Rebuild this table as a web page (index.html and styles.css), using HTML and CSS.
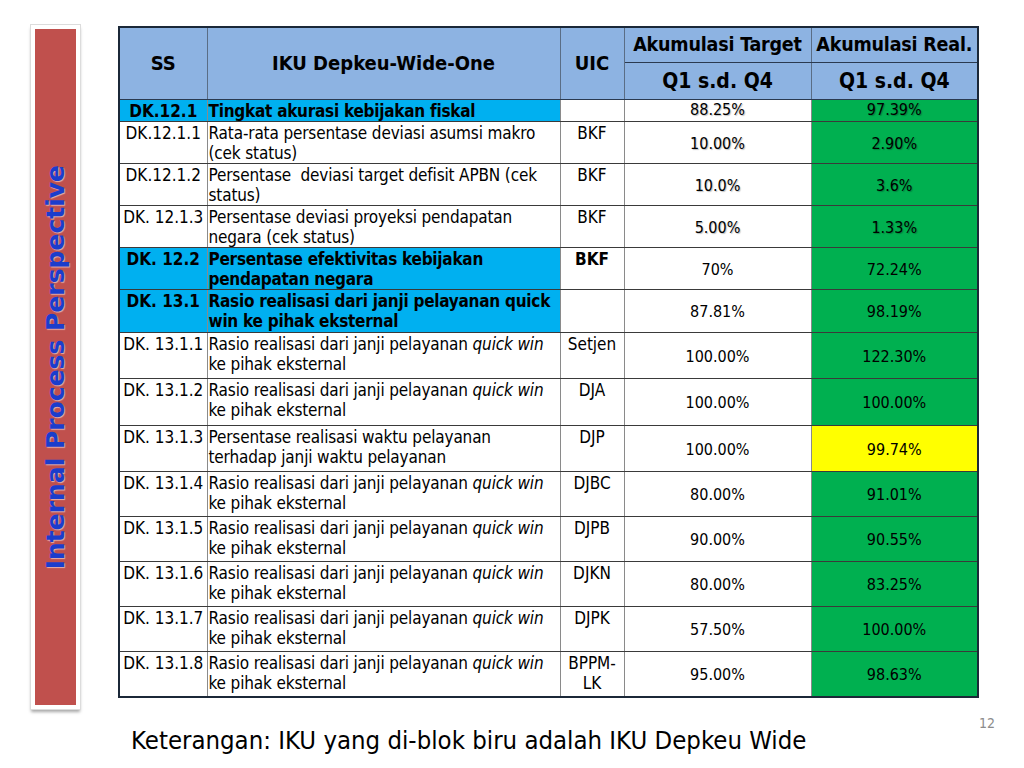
FILE: index.html
```html
<!DOCTYPE html>
<html>
<head>
<meta charset="utf-8">
<link rel="stylesheet" href="styles.css">
</head>
<body>
<div class="page">
  <div class="main">
    <div class="side">
      <div class="side-inner"><span class="side-text">Internal Process Perspective</span></div>
    </div>
    <table class="iku">
      <colgroup>
        <col class="c-ss"><col class="c-iku"><col class="c-uic"><col class="c-t"><col class="c-r">
      </colgroup>
      <thead>
        <tr class="h1">
          <th rowspan="2" class="hb">SS</th>
          <th rowspan="2" class="hb">IKU Depkeu-Wide-One</th>
          <th rowspan="2" class="hb">UIC</th>
          <th class="hs">Akumulasi Target</th>
          <th class="hs">Akumulasi Real.</th>
        </tr>
        <tr class="h2">
          <th class="hq">Q1 s.d. Q4</th>
          <th class="hq">Q1 s.d. Q4</th>
        </tr>
      </thead>
      <tbody>
        <tr class="r-main1 blue">
          <td class="ss">DK.12.1</td><td class="ik">Tingkat akurasi kebijakan fiskal</td><td class="uic white"></td><td class="num sh">88.25%</td><td class="num green sh">97.39%</td>
        </tr>
        <tr class="r42">
          <td class="ss">DK.12.1.1</td><td class="ik">Rata-rata persentase deviasi asumsi makro (cek status)</td><td class="uic">BKF</td><td class="num sh">10.00%</td><td class="num green sh">2.90%</td>
        </tr>
        <tr class="r42">
          <td class="ss">DK.12.1.2</td><td class="ik">Persentase&nbsp; deviasi target defisit APBN (cek status)</td><td class="uic">BKF</td><td class="num sh">10.0%</td><td class="num green sh">3.6%</td>
        </tr>
        <tr class="r42">
          <td class="ss">DK. 12.1.3</td><td class="ik">Persentase deviasi proyeksi pendapatan negara (cek status)</td><td class="uic">BKF</td><td class="num sh">5.00%</td><td class="num green sh">1.33%</td>
        </tr>
        <tr class="r42 blue">
          <td class="ss">DK. 12.2</td><td class="ik">Persentase efektivitas kebijakan pendapatan negara</td><td class="uic white b">BKF</td><td class="num">70%</td><td class="num green">72.24%</td>
        </tr>
        <tr class="r43 blue">
          <td class="ss">DK. 13.1</td><td class="ik">Rasio realisasi dari janji pelayanan quick win ke pihak eksternal</td><td class="uic white"></td><td class="num">87.81%</td><td class="num green">98.19%</td>
        </tr>
        <tr class="r46">
          <td class="ss">DK. 13.1.1</td><td class="ik">Rasio realisasi dari janji pelayanan <i>quick win</i> ke pihak eksternal</td><td class="uic">Setjen</td><td class="num">100.00%</td><td class="num green">122.30%</td>
        </tr>
        <tr class="r47">
          <td class="ss">DK. 13.1.2</td><td class="ik">Rasio realisasi dari janji pelayanan <i>quick win</i> ke pihak eksternal</td><td class="uic">DJA</td><td class="num">100.00%</td><td class="num green">100.00%</td>
        </tr>
        <tr class="r46">
          <td class="ss">DK. 13.1.3</td><td class="ik">Persentase realisasi waktu pelayanan terhadap janji waktu pelayanan</td><td class="uic">DJP</td><td class="num">100.00%</td><td class="num yellow">99.74%</td>
        </tr>
        <tr class="r45">
          <td class="ss">DK. 13.1.4</td><td class="ik">Rasio realisasi dari janji pelayanan <i>quick win</i> ke pihak eksternal</td><td class="uic">DJBC</td><td class="num">80.00%</td><td class="num green">91.01%</td>
        </tr>
        <tr class="r45">
          <td class="ss">DK. 13.1.5</td><td class="ik">Rasio realisasi dari janji pelayanan <i>quick win</i> ke pihak eksternal</td><td class="uic">DJPB</td><td class="num">90.00%</td><td class="num green">90.55%</td>
        </tr>
        <tr class="r45">
          <td class="ss">DK. 13.1.6</td><td class="ik">Rasio realisasi dari janji pelayanan <i>quick win</i> ke pihak eksternal</td><td class="uic">DJKN</td><td class="num">80.00%</td><td class="num green">83.25%</td>
        </tr>
        <tr class="r45">
          <td class="ss">DK. 13.1.7</td><td class="ik">Rasio realisasi dari janji pelayanan <i>quick win</i> ke pihak eksternal</td><td class="uic">DJPK</td><td class="num">57.50%</td><td class="num green">100.00%</td>
        </tr>
        <tr class="r46">
          <td class="ss">DK. 13.1.8</td><td class="ik">Rasio realisasi dari janji pelayanan <i>quick win</i> ke pihak eksternal</td><td class="uic">BPPM-<br>LK</td><td class="num">95.00%</td><td class="num green">98.63%</td>
        </tr>
      </tbody>
    </table>
  </div>
  <div class="foot">
    <div class="note">Keterangan: IKU yang di-blok biru adalah IKU Depkeu Wide</div>
    <div class="pnum">12</div>
  </div>
</div>
</body>
</html>
```
FILE: styles.css
```css
html, body {
  margin: 0;
  padding: 0;
  background: #ffffff;
}
.page {
  width: 1024px;
  height: 768px;
  overflow: hidden;
  font-family: "DejaVu Sans Condensed", "DejaVu Sans", sans-serif;
  color: #000;
}
.main {
  display: flex;
  align-items: flex-start;
  padding-top: 25px;
  padding-left: 31px;
}
.side {
  width: 41px;
  height: 676px;
  border: 4px solid #ffffff;
  outline: 1px solid #dcdcdc;
  box-shadow: 0 3px 3px rgba(0,0,0,0.35);
  background: #c0504d;
  flex: none;
}
.side-inner {
  width: 100%;
  height: 100%;
  display: flex;
  align-items: center;
  justify-content: center;
}
.side-text {
  writing-mode: vertical-rl;
  transform: rotate(180deg);
  font-family: "DejaVu Sans", sans-serif;
  font-weight: bold;
  font-size: 25px;
  color: #1b3dcc;
  text-shadow: -1px 1px 1px rgba(255,255,255,0.55);
  white-space: nowrap;
}
.iku {
  margin-left: 38px;
  margin-top: 1px;
  border-collapse: collapse;
  table-layout: fixed;
  width: 859px;
  border: 2px solid #1b2838;
}
.c-ss { width: 88px; }
.c-iku { width: 353px; }
.c-uic { width: 64px; }
.c-t { width: 187px; }
.c-r { width: 167px; }
.iku th, .iku td {
  padding: 0;
  border-left: 1px solid #8a8a8a;
  border-right: 1px solid #8a8a8a;
  border-top: 1px solid #3a3a3a;
  border-bottom: 1px solid #3a3a3a;
}
.iku th {
  background: #8db3e2;
  font-weight: bold;
  text-align: center;
  vertical-align: middle;
}
.iku thead th { border-color: #2a3a50; border-left-color: #5a6d85; border-right-color: #5a6d85; }
.hb { font-size: 20px; padding-bottom: 4px; }
.h1 { height: 35px; }
.h2 { height: 37px; }
.hs { font-size: 19.5px; padding-top: 2px; white-space: nowrap; letter-spacing: -0.2px; }
.hq { font-size: 21px; padding-top: 2px; }
.iku td { font-size: 17px; line-height: 20px; }
.r-main1 { height: 22px; }
.r42 { height: 42px; }
.r43 { height: 43px; }
.r45 { height: 45px; }
.r46 { height: 46px; }
.r47 { height: 47px; }
.ss {
  text-align: center;
  vertical-align: top;
  white-space: nowrap;
  padding-top: 1px !important;
}
.ik {
  vertical-align: top;
  padding: 1px 2px 0 1px !important;
  letter-spacing: -0.15px;
}
.uic {
  text-align: center;
  vertical-align: top;
  padding-top: 1px !important;
}
.iku td.num {
  text-align: center;
  vertical-align: middle;
  font-size: 16px;
  padding-top: 3px;
}
.blue .ss, .blue .ik {
  background: #00b0f0;
  font-weight: bold;
}
.blue .ik { letter-spacing: -0.25px; }
.r-main1 td { line-height: 20px; }
.iku .r-main1 td.num { padding-top: 0; }
.white { background: #ffffff; }
.b { font-weight: bold; }
.green { background: #00b050; }
.yellow { background: #ffff00; }
.iku td.green, .iku td.yellow { border-left-color: #2a2a2a; border-right: 2px solid #1b2838; }
.sh { text-shadow: 1px 1px 1px rgba(0,0,0,0.25); }
.foot {
  display: flex;
  justify-content: space-between;
  align-items: flex-start;
  padding-left: 131px;
  padding-right: 29px;
}
.note {
  font-size: 25.5px;
  margin-top: 16px;
  line-height: 30px;
}
.pnum {
  font-size: 14px;
  color: #8c8c8c;
  margin-top: 6px;
}
```
